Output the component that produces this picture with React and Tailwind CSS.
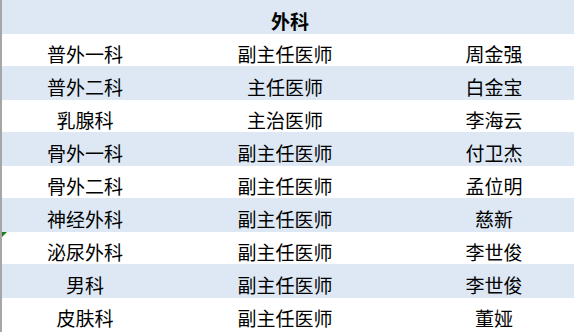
import React from "react";

const rows = [
  ["普外一科", "副主任医师", "周金强"],
  ["普外二科", "主任医师", "白金宝"],
  ["乳腺科", "主治医师", "李海云"],
  ["骨外一科", "副主任医师", "付卫杰"],
  ["骨外二科", "副主任医师", "孟位明"],
  ["神经外科", "副主任医师", "慈新"],
  ["泌尿外科", "副主任医师", "李世俊"],
  ["男科", "副主任医师", "李世俊"],
  ["皮肤科", "副主任医师", "董娅"],
];

function App() {
  return (
    <div
      className="w-[574px] h-[332px] overflow-hidden bg-white border-l-2 border-[#a6a6a6] relative"
      style={{ fontFamily: '"Noto Sans CJK SC", "Noto Sans", sans-serif' }}
    >
      <div className="h-[34px] bg-[#dde8f4] flex items-center justify-center pt-[6px] pl-[4px] text-[19px] font-bold text-black leading-none">
        外科
      </div>
      {rows.map((r, i) => (
        <div
          key={i}
          className={`grid grid-cols-[166px_234px_184px] items-center pt-[6px] text-[19px] text-black leading-none ${
            i % 2 === 0 ? "h-[32px] bg-white" : "h-[34px] bg-[#dde8f4]"
          }`}
        >
          <div className="text-center">{r[0]}</div>
          <div className="text-center">{r[1]}</div>
          <div className="text-center">{r[2]}</div>
        </div>
      ))}
      <div className="absolute left-0 top-[232px] w-0 h-0 border-t-[5px] border-r-[5px] border-t-[#1e7b1e] border-r-transparent" />
    </div>
  );
}

export default App;
